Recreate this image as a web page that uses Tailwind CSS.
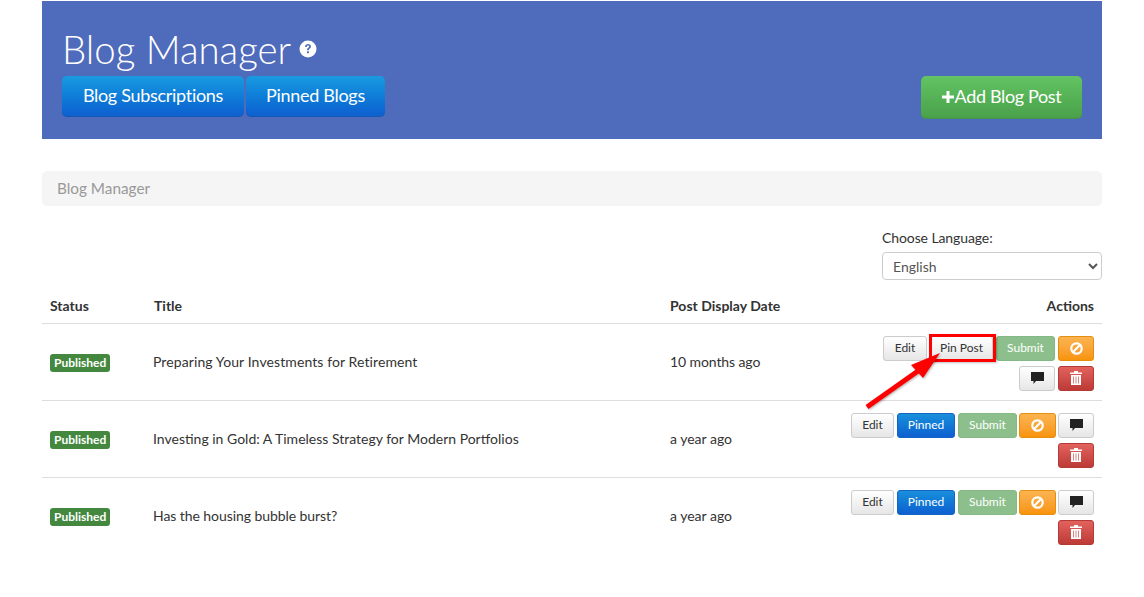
<!DOCTYPE html>
<html lang="en">
<head>
  <meta charset="UTF-8" />
  <title>Blog Manager</title>
  <script src="https://cdn.jsdelivr.net/npm/@tailwindcss/browser@4"></script>
</head>
<body class="bg-white font-['Lato','Liberation_Sans',sans-serif] text-[#333] text-[14px] relative h-[597px] overflow-hidden">
  <div class="mx-[42px] pt-px">
    <!-- header -->
    <header class="h-[138px] bg-[#4f6bbb] pl-5 pr-5 flex justify-between items-end pb-[20px]">
      <div>
        <h1 class="text-white font-light text-[38.4px] leading-[47px] mb-[3px] flex items-center">Blog Manager
          <svg class="ml-[8px] mt-[-2px]" width="18" height="18" viewBox="0 0 18 18"><circle cx="9" cy="9" r="8.500" fill="#fff"/><path d="M6 7c0-4 6-4 6-.6 0 2-2.300 2-2.300 3.800H8c0-2.600 2.200-2.600 2.200-3.700 0-1.300-2.300-1.200-2.400.5z" fill="#4f6bbb"/><rect x="8" y="11.300" width="1.900" height="1.900" fill="#4f6bbb"/></svg>
        </h1>
        <div class="flex gap-[2px] mb-[2px]">
          <a class="h-[41px] w-[182px] pb-[2px] flex items-center justify-center rounded-[5px] text-white text-[18px] tracking-[-0.3px] bg-linear-to-b from-[#1a9ae0] to-[#0f5fd0] border-b border-[#1458b0]">Blog Subscriptions</a>
          <a class="h-[41px] w-[139px] pb-[2px] flex items-center justify-center rounded-[5px] text-white text-[18px] tracking-[-0.3px] bg-linear-to-b from-[#1a9ae0] to-[#0f5fd0] border-b border-[#1458b0]">Pinned Blogs</a>
        </div>
      </div>
      <a class="h-[43px] w-[161px] pb-[2px] flex items-center justify-center rounded-[5px] text-white text-[18px] tracking-[-0.35px] bg-linear-to-b from-[#62c462] to-[#4aa14a] border-b border-[#46924a]">
        <svg class="mr-px mt-[2px]" width="12" height="12" viewBox="0 0 12 12"><path d="M4.500 0h3v4.500H12v3H7.500V12h-3V7.500H0v-3h4.500z" fill="#fff"/></svg>Add Blog Post
      </a>
    </header>

    <!-- breadcrumb -->
    <div class="mt-8 h-[35px] bg-[#f5f5f5] rounded-[5px] pl-[15px] flex items-center text-[15.300px] text-[#999]">Blog Manager</div>

    <!-- language -->
    <div class="mt-[22px] ml-[840px] w-[220px]">
      <label class="block text-[14px] tracking-[-0.1px] leading-[20px] mb-[4px]">Choose Language:</label>
      <select class="w-full h-[28px] border border-[#ccc] rounded-[4px] bg-white pl-[6px] text-[14px] text-[#555]">
        <option>English</option>
      </select>
    </div>

    <!-- table -->
    <table class="mt-[9px] w-full table-fixed border-collapse">
      <colgroup><col class="w-[104px]"><col class="w-[516px]"><col class="w-[180px]"><col></colgroup>
      <thead>
        <tr class="h-[34px] border-b border-[#ddd] font-bold text-left">
          <th class="pl-2">Status</th>
          <th class="pl-[8px]">Title</th>
          <th class="pl-2">Post Display Date</th>
          <th class="pr-2 text-right">Actions</th>
        </tr>
      </thead>
      <tbody>
        <tr class="h-[77px] border-b border-[#ddd]">
          <td class="pl-2"><span class="inline-block h-[18px] px-[4px] rounded-[3px] bg-[#44883f] text-white text-[12px] font-bold leading-[18px]">Published</span></td>
          <td class="pl-[7px] tracking-[0.1px]">Preparing Your Investments for Retirement</td>
          <td class="pl-2 tracking-[-0.1px]">10 months ago</td>
          <td class="pr-2 pt-[3px]">
            <div class="flex flex-wrap justify-end gap-x-[3px] gap-y-[5px] ml-auto w-[247px]">
              <button class="w-[44px] h-[25px] rounded-[3px] border border-[#ccc] text-[12px] bg-linear-to-b from-white to-[#e6e6e6]">Edit</button>
              <button class="w-[63px] h-[25px] rounded-[3px] border border-[#ccc] text-[12px] bg-linear-to-b from-white to-[#e6e6e6]">Pin Post</button>
              <button class="w-[59px] h-[25px] rounded-[3px] border border-[#84b884] text-[12px] text-white bg-[#8cbf8c]">Submit</button>
              <button class="w-[36px] h-[25px] rounded-[3px] border border-[#e58e10] bg-linear-to-b from-[#fbb450] to-[#f89406] flex items-center justify-center">
                <svg width="13" height="13" viewBox="0 0 13 13"><circle cx="6.500" cy="6.500" r="5.200" fill="none" stroke="#fff" stroke-width="2.200"/><path d="M2.800 10.200l7.400-7.400" stroke="#fff" stroke-width="2.200"/></svg>
              </button>
              <button class="w-[36px] h-[25px] rounded-[3px] border border-[#ccc] bg-linear-to-b from-white to-[#e6e6e6] flex items-center justify-center">
                <svg width="13" height="12" viewBox="0 0 13 12"><path d="M0 0h13v9H5l-2.500 3V9H0z" fill="#222"/></svg>
              </button>
              <button class="w-[36px] h-[25px] rounded-[3px] border border-[#b53a36] bg-linear-to-b from-[#e2625e] to-[#bd3a36] flex items-center justify-center">
                <svg width="12" height="14" viewBox="0 0 12 14"><path d="M4 0h4v1.500h4V3H0V1.500h4zM1 4h10v10H1zM3 5.500v7h.7v-7zm2.650 0v7h.7v-7zm2.650 0v7h.7v-7z" fill="#fff" fill-rule="evenodd"/></svg>
              </button>
            </div>
          </td>
        </tr>
        <tr class="h-[77px] border-b border-[#ddd]">
          <td class="pl-2"><span class="inline-block h-[18px] px-[4px] rounded-[3px] bg-[#44883f] text-white text-[12px] font-bold leading-[18px]">Published</span></td>
          <td class="pl-[7px]">Investing in Gold: A Timeless Strategy for Modern Portfolios</td>
          <td class="pl-2">a year ago</td>
          <td class="pr-2 pt-[3px]">
            <div class="flex flex-wrap justify-end gap-x-[3px] gap-y-[5px] ml-auto w-[247px]">
              <button class="w-[43px] h-[25px] rounded-[3px] border border-[#ccc] text-[12px] bg-linear-to-b from-white to-[#e6e6e6]">Edit</button>
              <button class="w-[58px] h-[25px] rounded-[3px] border border-[#1464c4] text-[12px] text-white bg-linear-to-b from-[#1a8fdc] to-[#0f5fd0]">Pinned</button>
              <button class="w-[59px] h-[25px] rounded-[3px] border border-[#84b884] text-[12px] text-white bg-[#8cbf8c]">Submit</button>
              <button class="w-[37px] -mx-px h-[25px] rounded-[3px] border border-[#e58e10] bg-linear-to-b from-[#fbb450] to-[#f89406] flex items-center justify-center">
                <svg width="13" height="13" viewBox="0 0 13 13"><circle cx="6.500" cy="6.500" r="5.200" fill="none" stroke="#fff" stroke-width="2.200"/><path d="M2.800 10.200l7.400-7.400" stroke="#fff" stroke-width="2.200"/></svg>
              </button>
              <button class="w-[36px] h-[25px] rounded-[3px] border border-[#ccc] bg-linear-to-b from-white to-[#e6e6e6] flex items-center justify-center">
                <svg width="13" height="12" viewBox="0 0 13 12"><path d="M0 0h13v9H5l-2.500 3V9H0z" fill="#222"/></svg>
              </button>
              <button class="w-[36px] h-[25px] rounded-[3px] border border-[#b53a36] bg-linear-to-b from-[#e2625e] to-[#bd3a36] flex items-center justify-center">
                <svg width="12" height="14" viewBox="0 0 12 14"><path d="M4 0h4v1.500h4V3H0V1.500h4zM1 4h10v10H1zM3 5.500v7h.7v-7zm2.650 0v7h.7v-7zm2.650 0v7h.7v-7z" fill="#fff" fill-rule="evenodd"/></svg>
              </button>
            </div>
          </td>
        </tr>
        <tr class="h-[77px]">
          <td class="pl-2"><span class="inline-block h-[18px] px-[4px] rounded-[3px] bg-[#44883f] text-white text-[12px] font-bold leading-[18px]">Published</span></td>
          <td class="pl-[7px] tracking-[-0.07px]">Has the housing bubble burst?</td>
          <td class="pl-2">a year ago</td>
          <td class="pr-2 pt-[3px]">
            <div class="flex flex-wrap justify-end gap-x-[3px] gap-y-[5px] ml-auto w-[247px]">
              <button class="w-[43px] h-[25px] rounded-[3px] border border-[#ccc] text-[12px] bg-linear-to-b from-white to-[#e6e6e6]">Edit</button>
              <button class="w-[58px] h-[25px] rounded-[3px] border border-[#1464c4] text-[12px] text-white bg-linear-to-b from-[#1a8fdc] to-[#0f5fd0]">Pinned</button>
              <button class="w-[59px] h-[25px] rounded-[3px] border border-[#84b884] text-[12px] text-white bg-[#8cbf8c]">Submit</button>
              <button class="w-[37px] -mx-px h-[25px] rounded-[3px] border border-[#e58e10] bg-linear-to-b from-[#fbb450] to-[#f89406] flex items-center justify-center">
                <svg width="13" height="13" viewBox="0 0 13 13"><circle cx="6.500" cy="6.500" r="5.200" fill="none" stroke="#fff" stroke-width="2.200"/><path d="M2.800 10.200l7.400-7.400" stroke="#fff" stroke-width="2.200"/></svg>
              </button>
              <button class="w-[36px] h-[25px] rounded-[3px] border border-[#ccc] bg-linear-to-b from-white to-[#e6e6e6] flex items-center justify-center">
                <svg width="13" height="12" viewBox="0 0 13 12"><path d="M0 0h13v9H5l-2.500 3V9H0z" fill="#222"/></svg>
              </button>
              <button class="w-[36px] h-[25px] rounded-[3px] border border-[#b53a36] bg-linear-to-b from-[#e2625e] to-[#bd3a36] flex items-center justify-center">
                <svg width="12" height="14" viewBox="0 0 12 14"><path d="M4 0h4v1.500h4V3H0V1.500h4zM1 4h10v10H1zM3 5.500v7h.7v-7zm2.650 0v7h.7v-7zm2.650 0v7h.7v-7z" fill="#fff" fill-rule="evenodd"/></svg>
              </button>
            </div>
          </td>
        </tr>
      </tbody>
    </table>
  </div>

  <!-- annotation drawn over the screenshot -->
  <div class="absolute left-[929px] top-[334px] w-[67px] h-[28px] border-[3px] border-[#ff0000] shadow-[1px_1px_2px_rgba(0,0,0,0.25)]"></div>
  <svg class="absolute left-[860px] top-[345px] drop-shadow-[1px_1px_1px_rgba(0,0,0,0.3)]" width="90" height="70" viewBox="0 0 90 70">
    <path d="M7 62L58 26" stroke="#ff0000" stroke-width="5" fill="none"/>
    <path d="M80 8L51 20L63 33z" fill="#ff0000"/>
  </svg>
</body>
</html>
